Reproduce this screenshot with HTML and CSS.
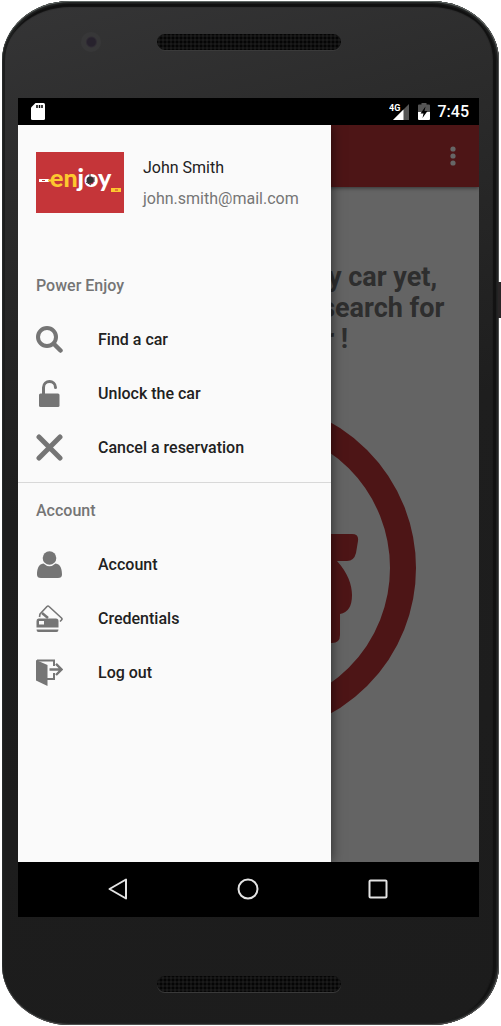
FILE: index.html
```html
<!DOCTYPE html>
<html lang="en">
<head>
<meta charset="utf-8">
<meta name="viewport" content="width=device-width, initial-scale=1">
<title>Power Enjoy</title>
<link rel="stylesheet" href="styles.css">
</head>
<body>
<div class="phone">
  <div class="bezel bezel-top">
    <span class="camera"></span>
    <span class="speaker"></span>
  </div>
  <div class="screen">
    <header class="status">
      <svg class="sd" width="14" height="17" viewBox="0 0 14 17"><path fill="#fff" d="M4.500 0H12.500Q14 0 14 1.500V15.500Q14 17 12.500 17H1.500Q0 17 0 15.500V4.500Z"/><path stroke="#000" stroke-width="1.500" d="M6 2v3M8.500 2v3M11 2v3"/></svg>
      <div class="status-right">
        <svg width="21" height="17" viewBox="0 0 21 17"><path fill="#555" d="M20 1V17H4Z"/><path fill="#fff" d="M14.500 6.500V17H4Z"/><text class="net" x="0" y="8">4G</text></svg>
        <svg width="12" height="17" viewBox="0 0 12 17"><path fill="#555" d="M3.500 0h5v1.500H11Q12 1.500 12 2.500V9H0V2.500Q0 1.500 1 1.500h2.500z"/><path fill="#fff" d="M0 9h12v7q0 1-1 1H1q-1 0-1-1z"/><path fill="#000" d="M7.500 3.500 2.500 10.500H5.500L4.500 15 9.500 8H6.500Z"/></svg>
        <span class="time">7:45</span>
      </div>
    </header>
    <div class="app">
      <main class="page">
        <div class="appbar">
          <button class="more" type="button" aria-label="More options"><svg width="6" height="20" viewBox="0 0 6 20"><g fill="#fff"><circle cx="3" cy="3" r="2.600"/><circle cx="3" cy="10" r="2.600"/><circle cx="3" cy="17" r="2.600"/></g></svg></button>
        </div>
        <h1 class="message">You haven’t booked any car yet,<br>press on the button to search for<br>an available car !</h1>
        <svg class="emblem" width="334" height="334" viewBox="0 0 334 334"><circle cx="167" cy="167" r="154" fill="none" stroke="#c03538" stroke-width="26"/><path fill="#c03538" d="M64 133H270Q277 133 276 140L274 152Q272 160 265 160H255C266 172 270 184 270 194Q270 211 258 213V234Q258 242 250 242H84Q76 242 76 234V213Q64 211 64 194C64 184 68 172 79 160H69Q62 160 60 152L58 140Q57 133 64 133Z"/></svg>
      </main>
      <div class="scrim"></div>
      <aside class="drawer">
        <div class="profile">
          <svg class="logo" width="88" height="61" viewBox="0 0 88 61"><rect width="88" height="61" fill="#c53539"/><path fill="#fff" d="M3 27h10v3H3z"/><path fill="#c53539" d="M6 28h3v1H6z"/><path fill="#fdc82f" d="M12 27.500h6v2h-6zM75 36h10v4H75z"/><text class="word" x="14" y="35" fill="#fdc82f">en<tspan fill="#fff">joy</tspan></text><circle cx="54" cy="28" r="3.500" fill="#333"/><path stroke="#333" fill="none" d="M54 22v4M50 30l5 3M58 25v5"/><path fill="#c53539" d="M79 37.500h3v1h-3z"/></svg>
          <div class="who">
            <span class="name">John Smith</span>
            <span class="mail">john.smith@mail.com</span>
          </div>
        </div>
        <nav class="group">
          <h2>Power Enjoy</h2>
          <a href="#find"><svg width="27" height="27" viewBox="0 0 27 27"><circle cx="11" cy="11" r="9" fill="none" stroke="#757575" stroke-width="4"/><path stroke="#757575" stroke-width="4.500" stroke-linecap="round" d="M18 18l6.500 6.500"/></svg>Find a car</a>
          <a href="#unlock"><svg width="27" height="27" viewBox="0 0 27 27"><path fill="none" stroke="#757575" stroke-width="3" stroke-linecap="round" d="M7.500 14V7.500C7.500-.5 19.500-.5 19.500 7.500"/><rect x="3" y="13.500" width="20.500" height="13.500" rx="1.500" fill="#757575"/></svg>Unlock the car</a>
          <a href="#cancel"><svg width="27" height="27" viewBox="0 0 27 27"><path stroke="#757575" stroke-width="5" stroke-linecap="round" d="M3 3 24 24M24 3 3 24"/></svg>Cancel a reservation</a>
        </nav>
        <nav class="group">
          <h2>Account</h2>
          <a href="#account"><svg width="27" height="27" viewBox="0 0 27 27"><g fill="#757575"><circle cx="13.500" cy="7" r="6.800"/><path d="M7.500 12.500C2 13 1 19 1 23.500Q1 27 5 27H22Q26 27 26 23.500C26 19 25 13 19.500 12.500Q13.500 18 7.500 12.500Z"/></g></svg>Account</a>
          <a href="#credentials"><svg width="27" height="27" viewBox="0 0 27 27"><path fill="#757575" fill-rule="evenodd" d="M2.500 13.500H20Q22.500 13.500 22.500 16V22.500H.500V16Q.500 13.500 2.500 13.500ZM3 16v3.500h5V16z"/><path fill="#757575" d="M.500 24.500h22q0 2.500-2 2.500h-18q-2 0-2-2.500z"/><path fill="none" stroke="#757575" stroke-width="1.600" stroke-linejoin="round" d="M3.500 12 4 9 11 1.500Q12 .500 13 1.500L25.500 13Q26.500 14 25.500 15L24 16.500"/><path stroke="#757575" stroke-width="2.500" d="M6 8l6 5"/></svg>Credentials</a>
          <a href="#logout"><svg width="27" height="27" viewBox="0 0 27 27"><path fill="#757575" d="M0 1 11.500 6V27L0 21.500Z"/><path fill="none" stroke="#757575" stroke-width="2" d="M1 1.500H18V7M18 14V20H11"/><path fill="none" stroke="#757575" stroke-width="2.400" d="M13.500 10.500H25M20 4.800 25.500 10.500 20 16"/></svg>Log out</a>
        </nav>
      </aside>
    </div>
    <footer class="navbar">
      <button type="button" aria-label="Back"><svg width="22" height="22" viewBox="0 0 22 22"><path d="M19 1.500V20.500L2.500 11Z"/></svg></button>
      <button type="button" aria-label="Home"><svg width="22" height="22" viewBox="0 0 22 22"><circle cx="11" cy="11" r="9.500"/></svg></button>
      <button type="button" aria-label="Recent apps"><svg width="22" height="22" viewBox="0 0 22 22"><rect x="2.500" y="2.500" width="17" height="17" rx="1"/></svg></button>
    </footer>
  </div>
  <div class="bezel bezel-bottom"><span class="speaker"></span></div>
  <span class="side-button"></span>
</div>
</body>
</html>
```
FILE: styles.css
```css
* { box-sizing: border-box; }
body {
  margin: 0;
  background: #fff;
  font-family: Roboto, "Liberation Sans", sans-serif;
}
svg { display: block; flex: none; }
button { border: 0; padding: 0; background: none; }

.phone {
  position: relative;
  display: flex;
  flex-direction: column;
  min-height: calc(100vh - 2px);
  margin: 1px 2px;
  padding: 0 20px 0 16px;
  border-radius: 68px / 60px;
  background: linear-gradient(165deg, #353536 0%, #2b2b2b 18%, #1e1e1e 45%, #1c1c1c 100%);
  box-shadow: inset 0 1px 1px #68706d, inset -1px 0 1px #555, inset 0 -1px 1px #555,
    inset 0 0 0 3px #1d1e1e, inset 0 6px 1px #101010, inset -6px 0 1px #121212;
}
.bezel { display: flex; justify-content: center; flex: none; }
.bezel-top { position: relative; height: 97px; padding-top: 33px; }
.bezel-bottom { height: 108px; padding-top: 59px; }
.speaker {
  width: 184px;
  height: 16px;
  border-radius: 8px;
  background: radial-gradient(circle, #050505 1px, transparent 2px) 2px 2px / 4px 4px, #1a1a1a;
  box-shadow: 0 1px 0 #3a3a3a;
}
.camera {
  position: absolute;
  left: 63px;
  top: 31px;
  width: 20px;
  height: 20px;
  border-radius: 50%;
  background: radial-gradient(circle at 52% 50%, #27222d 0 4px, #302c34 5px, #373738 6px);
}
.side-button {
  position: absolute;
  right: -2px;
  top: 281px;
  width: 3px;
  height: 36px;
  background: #292526;
}

.screen { display: flex; flex-direction: column; flex: 1; background: #000; }
.status {
  display: flex;
  align-items: center;
  justify-content: space-between;
  height: 27px;
  padding: 0 10px 0 13px;
  color: #fff;
}
.status-right { display: flex; align-items: center; gap: 8px; }
.net { font-size: 9px; font-weight: 700; fill: #fff; }
.time { font-size: 16px; line-height: 20px; font-weight: 500; }

.app { position: relative; display: flex; flex: 1; overflow: hidden; background: #fafafa; }
.page { position: absolute; inset: 0; overflow: hidden; }
.appbar {
  display: flex;
  align-items: center;
  justify-content: flex-end;
  height: 62px;
  padding-right: 23px;
  background: #c03538;
  box-shadow: 0 1px 4px rgba(0, 0, 0, .5);
}
.message {
  margin: 75px 0 46px;
  padding-right: 4px;
  color: #737373;
  font-size: 27px;
  line-height: 31px;
  font-weight: 700;
  text-align: center;
  white-space: nowrap;
}
.emblem { margin: 0 auto; }
.scrim { position: absolute; inset: 0; background: rgba(0, 0, 0, .6); }
.drawer {
  position: relative;
  width: 68%;
  background: #fafafa;
  box-shadow: 0 0 12px rgba(0, 0, 0, .6);
}
.profile {
  display: flex;
  align-items: flex-start;
  gap: 19px;
  height: 133px;
  padding: 27px 18px 0;
}
.who { display: flex; flex-direction: column; font-size: 16px; line-height: 31px; }
.name { color: #212121; }
.mail { color: #757575; }
.word { font-family: Lato, sans-serif; font-size: 25px; font-weight: 900; }

.group { padding-bottom: 8px; }
.group + .group { border-top: 1px solid #d8d8d8; }
.group h2 {
  margin: 0;
  padding: 2px 18px 0;
  color: #757575;
  font-size: 16px;
  line-height: 52px;
  font-weight: 500;
}
.group a {
  display: flex;
  align-items: center;
  gap: 35px;
  height: 54px;
  padding: 0 18px;
  color: #212121;
  font-size: 16px;
  font-weight: 500;
  text-decoration: none;
}

.navbar { display: flex; justify-content: center; height: 55px; padding: 0 2px 2px 0; }
.navbar button { display: grid; place-items: center; width: 130px; }
.navbar svg { fill: none; stroke: #e4e4e4; stroke-width: 2; stroke-linejoin: round; }
```
